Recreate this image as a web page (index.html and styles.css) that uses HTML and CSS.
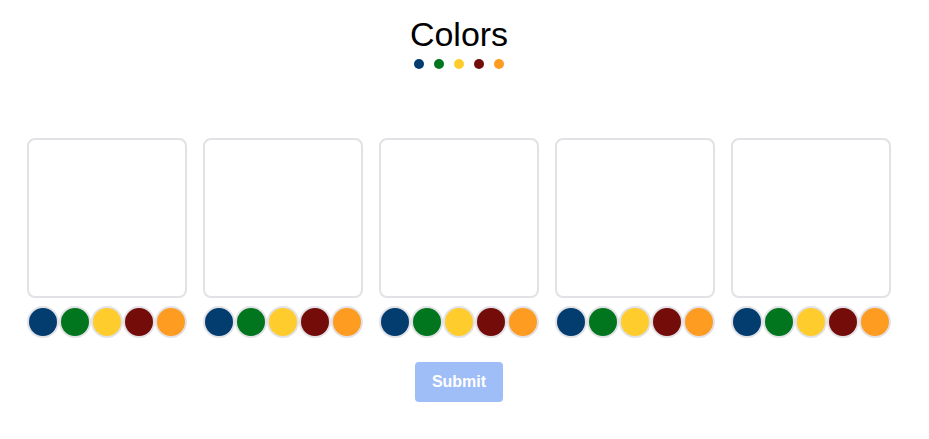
FILE: index.html
```html
<!DOCTYPE html>
<html>
<head>
<meta charset="utf-8">
<link rel="stylesheet" href="styles.css">
</head>
<body>
<main class="page">
  <h1 class="title">Colors</h1>
  <div class="dots">
    <span class="dot navy"></span>
    <span class="dot green"></span>
    <span class="dot yellow"></span>
    <span class="dot maroon"></span>
    <span class="dot orange"></span>
  </div>
  <div class="cards">
    <div class="slot">
      <div class="card"></div>
      <div class="swatches"><span class="sw navy"></span><span class="sw green"></span><span class="sw yellow"></span><span class="sw maroon"></span><span class="sw orange"></span></div>
    </div>
    <div class="slot">
      <div class="card"></div>
      <div class="swatches"><span class="sw navy"></span><span class="sw green"></span><span class="sw yellow"></span><span class="sw maroon"></span><span class="sw orange"></span></div>
    </div>
    <div class="slot">
      <div class="card"></div>
      <div class="swatches"><span class="sw navy"></span><span class="sw green"></span><span class="sw yellow"></span><span class="sw maroon"></span><span class="sw orange"></span></div>
    </div>
    <div class="slot">
      <div class="card"></div>
      <div class="swatches"><span class="sw navy"></span><span class="sw green"></span><span class="sw yellow"></span><span class="sw maroon"></span><span class="sw orange"></span></div>
    </div>
    <div class="slot">
      <div class="card"></div>
      <div class="swatches"><span class="sw navy"></span><span class="sw green"></span><span class="sw yellow"></span><span class="sw maroon"></span><span class="sw orange"></span></div>
    </div>
  </div>
  <button class="submit" disabled>Submit</button>
</main>
</body>
</html>
```
FILE: styles.css
```css
html, body {
  margin: 0;
  padding: 0;
  background: #ffffff;
  font-family: "Liberation Sans", Arial, sans-serif;
}
.page {
  width: 918px;
  display: flex;
  flex-direction: column;
  align-items: center;
}
.title {
  margin: 15px 0 0 0;
  font-size: 34px;
  font-weight: 400;
  line-height: 39px;
  color: #000;
}
.dots {
  display: flex;
  gap: 10px;
  margin-top: 5px;
}
.dot {
  width: 10px;
  height: 10px;
  border-radius: 50%;
}
.navy { background: #033c6f; }
.green { background: #02761f; }
.yellow { background: #fecd2d; }
.maroon { background: #740d0a; }
.orange { background: #fe9c22; }
.cards {
  display: flex;
  gap: 16px;
  margin-top: 69px;
}
.slot {
  display: flex;
  flex-direction: column;
  gap: 8px;
}
.card {
  width: 156px;
  height: 156px;
  border: 2px solid #e2e2e6;
  border-radius: 8px;
}
.swatches {
  display: flex;
}
.sw {
  width: 28px;
  height: 28px;
  border: 2px solid #e2e2e6;
  border-radius: 50%;
}
.submit {
  margin-top: 24px;
  width: 88px;
  height: 40px;
  border: none;
  border-radius: 4px;
  background: #9fbdf6;
  color: #ffffff;
  font-family: "Liberation Sans", Arial, sans-serif;
  font-weight: 700;
  font-size: 16px;
  padding: 0;
}
```
